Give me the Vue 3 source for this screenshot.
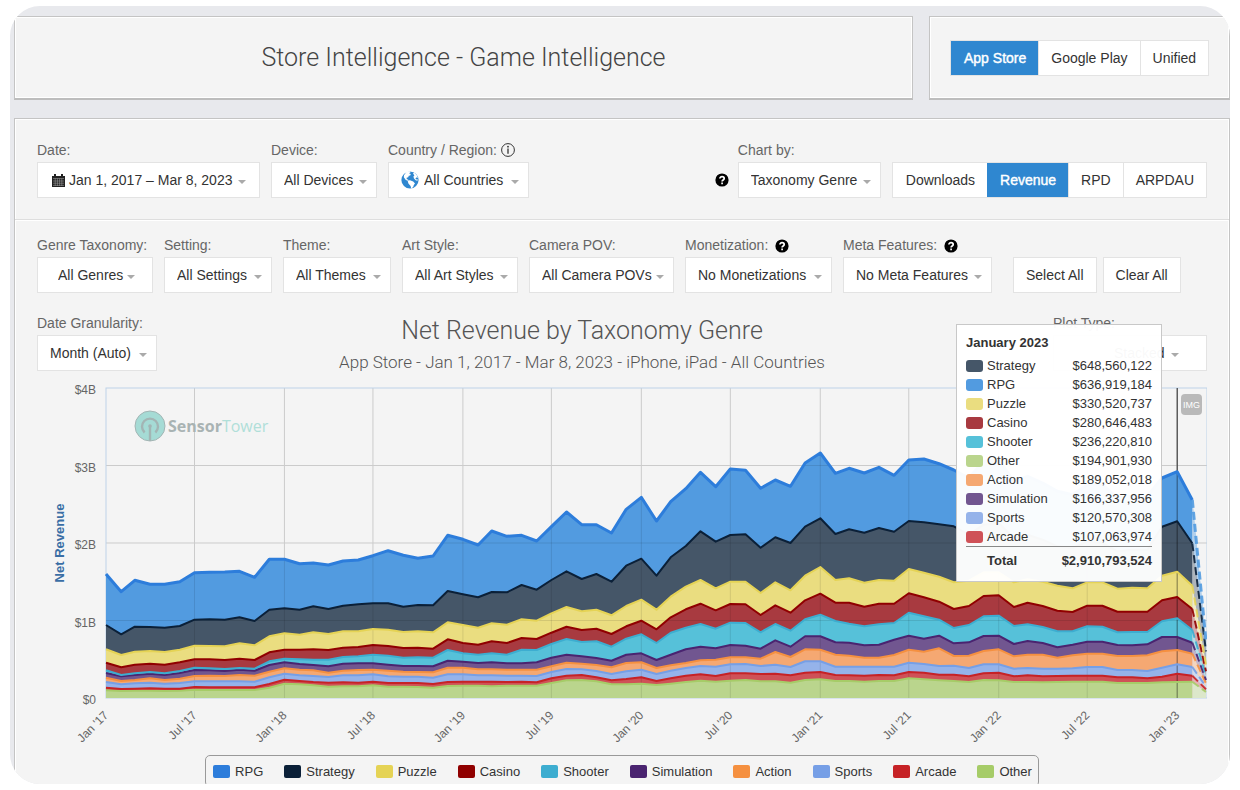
<script setup>
const stores = ['App Store', 'Google Play', 'Unified']
const metrics = ['Downloads', 'Revenue', 'RPD', 'ARPDAU']

const filters = [
  { id: 'genre', label: 'Genre Taxonomy:', value: 'All Genres', size: 'w116 roomy' },
  { id: 'setting', label: 'Setting:', value: 'All Settings', size: 'w108' },
  { id: 'theme', label: 'Theme:', value: 'All Themes', size: 'w108' },
  { id: 'art', label: 'Art Style:', value: 'All Art Styles', size: 'w116' },
  { id: 'camera', label: 'Camera POV:', value: 'All Camera POVs', size: 'w145' },
  { id: 'money', label: 'Monetization:', value: 'No Monetizations', size: 'w147', help: true },
  { id: 'meta', label: 'Meta Features:', value: 'No Meta Features', size: 'w149', help: true },
]

const tooltipRows = [
  ['Strategy', '$648,560,122', '#455668'],
  ['RPG', '$636,919,184', '#529be0'],
  ['Puzzle', '$330,520,737', '#eadd80'],
  ['Casino', '$280,646,483', '#a83a40'],
  ['Shooter', '$236,220,810', '#56c1d9'],
  ['Other', '$194,901,930', '#bad58d'],
  ['Action', '$189,052,018', '#f5a872'],
  ['Simulation', '$166,337,956', '#715690'],
  ['Sports', '$120,570,308', '#95b3ea'],
  ['Arcade', '$107,063,974', '#cf5157'],
]

// Stacked upper boundary of every genre per month, Jan 2017 to Mar 2023.
// 930 units equal $4B.
const series = [
  { name: 'RPG', line: '#2d7ddb', fill: '#529be0', width: 3, top: [372,319,353,341,341,349,376,377,378,380,362,416,416,403,405,399,411,414,427,442,428,419,426,488,476,459,501,485,488,471,514,558,520,520,495,566,602,531,589,628,677,634,687,683,629,654,635,705,735,674,689,675,692,668,714,717,703,684,660,710,715,650,665,645,620,610,640,640,600,605,605,660,679,594,170] },
  { name: 'Strategy', line: '#0b2038', fill: '#455668', width: 2, top: [219,191,214,213,211,216,235,236,235,242,231,265,269,265,275,267,277,281,284,284,274,279,278,321,311,302,318,317,339,325,354,380,357,372,349,397,418,367,422,456,500,469,489,491,451,482,465,514,539,492,506,496,510,499,531,527,521,515,490,520,525,480,490,475,455,450,470,465,440,445,445,514,530,464,140] },
  { name: 'Puzzle', line: '#e5d355', fill: '#eadd80', width: 2, top: [146,129,139,141,138,145,157,156,155,164,158,185,194,190,197,192,200,200,207,205,198,200,197,227,219,211,224,220,236,232,254,273,260,265,248,276,295,265,304,334,354,329,349,349,315,347,323,367,393,354,359,346,354,352,387,376,364,347,352,377,377,347,356,349,337,329,347,347,328,331,329,367,379,337,100] },
  { name: 'Casino', line: '#900000', fill: '#a83a40', width: 2, top: [106,92,100,103,100,107,116,116,114,118,114,137,145,145,146,144,151,153,159,156,150,151,148,176,165,160,170,165,180,177,196,214,204,208,192,215,232,206,242,266,283,263,282,281,249,278,256,293,313,286,286,274,283,283,314,302,289,267,276,306,308,273,286,276,262,258,277,277,259,259,259,293,303,267,80] },
  { name: 'Shooter', line: '#3dadd0', fill: '#56c1d9', width: 2, top: [83,69,74,78,74,81,91,89,87,90,88,110,118,116,115,115,123,125,130,127,121,122,121,144,134,130,134,130,145,144,162,177,168,170,154,178,191,165,196,211,222,208,226,225,197,222,202,236,250,231,223,215,221,225,256,245,235,210,219,245,247,216,221,213,200,200,215,214,197,198,198,230,239,204,66] },
  { name: 'Simulation', line: '#4a2470', fill: '#715690', width: 2, top: [75,65,69,73,69,75,84,83,81,85,82,99,107,102,99,95,103,104,104,100,96,96,95,112,109,105,107,104,104,107,121,130,125,120,112,130,134,114,130,146,154,149,159,157,148,173,154,185,185,167,166,158,160,175,187,178,187,164,167,186,187,162,171,165,152,160,169,169,159,158,161,183,183,166,54] },
  { name: 'Action', line: '#f59040', fill: '#f5a872', width: 2, top: [61,51,54,59,54,58,66,67,66,69,67,79,89,85,83,76,82,84,85,82,79,78,77,91,91,86,86,85,85,85,95,106,103,99,92,105,107,90,98,105,113,115,122,122,118,138,123,146,145,130,127,121,121,129,145,139,149,126,127,141,146,125,130,130,121,128,133,133,126,126,128,140,144,133,44] },
  { name: 'Sports', line: '#769fe6', fill: '#95b3ea', width: 2, top: [48,41,44,46,43,45,50,50,50,50,49,62,73,68,66,63,68,68,71,65,64,64,61,71,71,68,68,67,67,66,78,87,86,81,72,80,85,72,82,90,96,94,101,102,96,100,93,110,110,94,94,94,94,94,106,102,96,97,90,101,101,88,90,88,88,89,93,93,84,84,81,91,101,93,34] },
  { name: 'Arcade', line: '#c62226', fill: '#cf5157', width: 2, top: [31,27,28,29,28,28,33,32,32,32,32,42,55,51,48,46,47,46,49,45,45,45,42,48,49,49,49,48,49,47,59,67,69,62,53,57,62,51,59,67,71,66,74,74,72,73,68,76,78,69,68,67,69,68,78,76,70,70,65,74,76,65,68,65,66,67,67,67,62,62,59,64,73,67,26] },
  { name: 'Other', line: '#a6cc68', fill: '#bad58d', width: 2, top: [23,21,22,22,21,22,25,24,24,24,24,31,43,41,38,34,35,35,38,34,34,33,31,36,37,37,35,37,37,37,45,53,54,50,41,41,43,39,43,48,52,49,52,54,50,50,46,54,56,51,51,49,51,51,59,56,53,51,48,54,53,48,48,47,48,49,49,49,45,45,45,47,48,49,18] },
]

const plot = { left: 69, top: 14, right: 1170, bottom: 324 }
const DAY = 86400000
const start = Date.UTC(2017, 0, 1)
const end = Date.UTC(2023, 2, 3)
const xs = Array.from({ length: 75 }, (_, i) => {
  const days = (Date.UTC(2017, i, 1) - start) / DAY
  return plot.left + (days * (plot.right - plot.left)) / ((end - start) / DAY)
})
const yOf = (v) => plot.bottom - (v * (plot.bottom - plot.top)) / 930
const points = (s, from, to) =>
  s.top.slice(from, to).map((v, i) => `${xs[i + from].toFixed(1)},${yOf(v).toFixed(1)}`).join(' ')
const area = (s, from, to) =>
  `${xs[from].toFixed(1)},${plot.bottom} ${points(s, from, to)} ${xs[to - 1].toFixed(1)},${plot.bottom}`

const ticks = xs
  .map((x, i) => ({ x, i, label: `${i % 12 ? 'Jul' : 'Jan'} '${17 + Math.floor(i / 12)}` }))
  .filter((t) => t.i % 6 === 0)
const levels = [4, 3, 2, 1, 0].map((n) => ({
  y: yOf(n * 232.5),
  label: n ? `$${n}B` : '$0',
}))
const crossX = xs[72]
</script>

<template>
  <div class="frame">
    <header class="top">
      <div class="card heading"><h1>Store Intelligence - Game Intelligence</h1></div>
      <div class="card store">
        <div class="segmented">
          <button v-for="(s, i) in stores" :key="s" type="button" :class="{ active: i === 0 }">{{ s }}</button>
        </div>
      </div>
    </header>

    <main class="card panel">
      <section class="row first">
        <div class="field">
          <label for="date">Date:</label>
          <button id="date" type="button" class="control date">
            <svg class="calendar" viewBox="0 0 13 13" width="13" height="13" aria-hidden="true">
              <path d="M0 2h13v11H0z" fill="#222" />
              <path d="M2 0h2v3H2zM9 0h2v3H9z" fill="#222" />
              <path d="M1 4.500h11M1 7h11M1 9.200h11M1 11.400h11M3.200 4.500v7.500M5.400 4.500v7.500M7.600 4.500v7.500M9.800 4.500v7.500" stroke="#aaa" stroke-width=".5" fill="none" />
            </svg>
            <span>Jan 1, 2017 – Mar 8, 2023</span>
            <i class="caret"></i>
          </button>
        </div>
        <div class="field">
          <label for="device">Device:</label>
          <div class="select w106"><select id="device"><option>All Devices</option></select><i class="caret"></i></div>
        </div>
        <div class="field">
          <label for="country">Country / Region:
            <svg class="info" viewBox="0 0 14 14" width="14" height="14" aria-hidden="true">
              <circle cx="7" cy="7" r="6.400" fill="none" stroke="#333" stroke-width="1" />
              <path d="M7 5.600v5.200" fill="none" stroke="#333" stroke-width="1.300" />
              <circle cx="7" cy="3.700" r=".9" fill="#333" />
            </svg>
          </label>
          <div class="select w141 flagged">
            <svg class="globe" viewBox="0 0 18 18" width="18" height="18" aria-hidden="true">
              <circle cx="9" cy="9" r="8.600" fill="#2f87d0" />
              <path d="M5.500 .8 9 .3l.6 1-1.600 1 1.800.6-.6 1.600-1.400.2-.6 1.500-1.600.6.2 1.400 1.400.2-.2 1.300-2.200-.8-2-2.600.2-2z" fill="#fff" />
              <path d="M6.600 9.600l2.400-.4 3.200 1.400 1.800 1.800-1.200 1.600-.6 2-2 1.600-.6-2.600-2.200-2.400z" fill="#fff" />
              <path d="M11.800 2.200l2-.2 2 2.200 1.200 2.600-1.800-.4-.8 1 1.200 1 1.400.2-.2 1-1.800-.2-2-1.800-.6-2 1-1.200z" fill="#fff" />
            </svg>
            <select id="country"><option>All Countries</option></select><i class="caret"></i>
          </div>
        </div>
        <div class="field chartby">
          <label for="chartby">Chart by:</label>
          <div class="with-help">
            <svg class="help" viewBox="0 0 14 14" width="14" height="14" aria-hidden="true">
              <circle cx="7" cy="7" r="6.600" fill="#000" />
              <path d="M4.900 5.500c0-2.500 4.300-2.400 4.300 0C9.200 7 7.100 6.900 7.100 8.500M7.100 9.600v1.700" fill="none" stroke="#fff" stroke-width="1.700" />
            </svg>
            <div class="select w143"><select id="chartby"><option>Taxonomy Genre</option></select><i class="caret"></i></div>
          </div>
        </div>
        <div class="segmented">
          <button v-for="m in metrics" :key="m" type="button" :class="{ active: m === 'Revenue' }">{{ m }}</button>
        </div>
      </section>

      <section class="row second">
        <div v-for="f in filters" :key="f.id" class="field">
          <label :for="f.id">{{ f.label }}
            <svg v-if="f.help" class="help inline" viewBox="0 0 14 14" width="14" height="14" aria-hidden="true">
              <circle cx="7" cy="7" r="6.600" fill="#000" />
              <path d="M4.900 5.500c0-2.500 4.300-2.400 4.300 0C9.200 7 7.100 6.900 7.100 8.500M7.100 9.600v1.700" fill="none" stroke="#fff" stroke-width="1.700" />
            </svg>
          </label>
          <div class="select" :class="f.size"><select :id="f.id"><option>{{ f.value }}</option></select><i class="caret"></i></div>
        </div>
        <div class="actions">
          <button type="button" class="control">Select All</button>
          <button type="button" class="control">Clear All</button>
        </div>
      </section>

      <section class="chart">
        <div class="chart-head">
          <div class="field">
            <label for="granularity">Date Granularity:</label>
            <div class="select w120"><select id="granularity"><option>Month (Auto)</option></select><i class="caret"></i></div>
          </div>
          <div class="titles">
            <h2>Net Revenue by Taxonomy Genre</h2>
            <p>App Store - Jan 1, 2017 - Mar 8, 2023 - iPhone, iPad - All Countries</p>
          </div>
          <div class="field">
            <label for="plot">Plot Type:</label>
            <div class="select plot-type"><select id="plot"><option>Stacked</option></select><i class="caret"></i></div>
          </div>
        </div>

        <div class="canvas">
          <svg class="graph" viewBox="0 0 1170 373" role="img" aria-label="Net revenue by taxonomy genre">
            <defs>
              <clipPath id="filled"><polygon :points="area(series[0], 0, 74)" /></clipPath>
            </defs>
            <g stroke="#cbcbcb">
              <line v-for="t in ticks.slice(1)" :key="t.i" :x1="t.x" :x2="t.x" :y1="plot.top" :y2="plot.bottom" />
              <line v-for="l in levels.slice(1, 4)" :key="l.label" :x1="plot.left" :x2="plot.right" :y1="l.y" :y2="l.y" />
            </g>
            <rect :x="plot.left" :y="plot.top" :width="plot.right - plot.left" :height="plot.bottom - plot.top" fill="none" stroke="#bdd2e8" />
            <line :x1="crossX" :x2="crossX" :y1="plot.top" :y2="plot.bottom" stroke="#222" />

            <g class="brand">
              <circle cx="113" cy="52" r="15" fill="#a5dbd5" stroke="#a3b5b4" />
              <path d="M107.600 58.500a8 8 0 1 1 10.800 0" fill="none" stroke="#a3b5b4" stroke-width="2.400" />
              <path d="M113 52v15" stroke="#a3b5b4" stroke-width="2.400" />
              <circle cx="113" cy="52" r="1.800" fill="#a3b5b4" />
              <text x="131" y="58" class="brand-text"><tspan class="brand-bold">Sensor</tspan><tspan class="brand-light">Tower</tspan></text>
            </g>

            <g v-for="s in series" :key="s.name">
              <polygon :points="area(s, 0, 74)" :fill="s.fill" />
              <polygon :points="area(s, 73, 75)" :fill="s.fill" />
              <polygon :points="area(s, 73, 75)" fill="#f4f4f4" fill-opacity=".6" />
            </g>
            <g clip-path="url(#filled)" stroke="#000">
              <line v-for="t in ticks.slice(1)" :key="t.i" :x1="t.x" :x2="t.x" :y1="plot.top" :y2="plot.bottom" stroke-opacity=".1" />
              <line v-for="l in levels.slice(1, 4)" :key="l.label" :x1="plot.left" :x2="plot.right" :y1="l.y" :y2="l.y" stroke-opacity=".1" />
              <line :x1="crossX" :x2="crossX" :y1="plot.top" :y2="plot.bottom" stroke-opacity=".4" />
            </g>
            <g v-for="s in [...series].reverse()" :key="s.name" fill="none" :stroke="s.line" stroke-linejoin="round">
              <polyline :points="points(s, 0, 74)" :stroke-width="s.width" />
              <polyline :points="points(s, 73, 75)" :stroke="s.name === 'RPG' ? '#529be0' : s.line" :stroke-width="s.width" stroke-dasharray="8 4" stroke-opacity=".9" />
            </g>

            <text v-for="l in levels" :key="l.label" x="59" :y="l.y + 6" text-anchor="end" class="axis">{{ l.label }}</text>
            <text v-for="t in ticks" :key="t.i" :transform="`translate(${t.x + 3} ${plot.bottom + 18}) rotate(-45)`" text-anchor="end" class="axis">{{ t.label }}</text>
            <text transform="translate(27 169) rotate(-90)" text-anchor="middle" class="axis-title">Net Revenue</text>
          </svg>
          <button type="button" class="export">IMG</button>
        </div>

        <ul class="legend">
          <li v-for="s in series" :key="s.name">
            <svg class="swatch" width="17" height="13" aria-hidden="true"><rect width="17" height="13" rx="2" :fill="s.line" /></svg>{{ s.name }}
          </li>
        </ul>

        <div class="tooltip">
          <strong>January 2023</strong>
          <table>
            <tbody>
              <tr v-for="r in tooltipRows" :key="r[0]">
                <td class="key"><svg width="17" height="12" aria-hidden="true"><rect width="17" height="12" rx="3" :fill="r[2]" /></svg></td>
                <td>{{ r[0] }}</td>
                <td class="num">{{ r[1] }}</td>
              </tr>
            </tbody>
            <tfoot>
              <tr><td></td><th>Total</th><th class="num">$2,910,793,524</th></tr>
            </tfoot>
          </table>
        </div>
      </section>
    </main>
  </div>
</template>

<style>
body {
  background: #fff;
}
</style>

<style scoped>
.frame {
  box-sizing: border-box;
  height: calc(100vh - 12px);
  margin: 6px 10px;
  padding: 10px 0 0 4px;
  overflow: hidden;
  border-radius: 30px;
  background: #e8e9ed;
  color: #333;
  font-family: "Liberation Sans", Arial, sans-serif;
  font-size: 14px;
}
.frame * {
  box-sizing: border-box;
}
button,
select {
  font: inherit;
  color: inherit;
}
h1,
h2,
p {
  margin: 0;
}
.card {
  background: #f4f4f4;
  border: 1px solid #c4c4c4;
  box-shadow: inset 0 0 0 1px #fff;
}
.top {
  display: flex;
  gap: 16px;
  height: 84px;
}
.top .card {
  display: flex;
  align-items: center;
  border-bottom: 2px solid #bdbdbd;
}
.heading {
  flex: 1;
  justify-content: center;
}
.heading h1 {
  font-family: Roboto, "Liberation Sans", sans-serif;
  font-size: 25px;
  font-weight: 300;
  color: #444;
}
.store {
  width: 301px;
  padding-left: 20px;
}
.segmented {
  display: flex;
  height: 36px;
  border: 1px solid #e3e3e3;
  background: #fff;
}
.segmented button {
  padding: 0 12px;
  border: 0;
  border-left: 1px solid #e3e3e3;
  background: #fff;
}
.segmented button:first-child {
  border-left-color: transparent;
}
.segmented .active {
  background: #2f87d0;
  color: #fff;
  border-color: #2f87d0;
  -webkit-text-stroke: 0.4px #fff;
}
.panel {
  margin-top: 18px;
  min-height: 100%;
}
.row {
  display: flex;
  align-items: flex-end;
  gap: 11px;
  padding: 0 22px;
}
.first {
  padding-top: 23px;
  padding-bottom: 21px;
  border-bottom: 1px solid #dedede;
  box-shadow: 0 1px 0 #fff;
}
.second {
  padding-top: 17px;
}
.field {
  display: flex;
  flex-direction: column;
  gap: 4px;
}
.field label {
  display: flex;
  align-items: center;
  gap: 4px;
  height: 16px;
  line-height: 16px;
  color: #666;
  white-space: nowrap;
}
.field label .inline {
  margin-left: 3px;
  margin-top: 2px;
}
.control {
  height: 36px;
  padding: 0 12px;
  border: 1px solid #e3e3e3;
  background: #fff;
  white-space: nowrap;
}
.date {
  display: flex;
  align-items: center;
  gap: 4px;
  width: 223px;
  padding: 0 13px 0 14px;
}
.date .caret {
  margin-left: auto;
  margin-top: 3px;
}
.caret {
  width: 0;
  height: 0;
  border: 4px solid transparent;
  border-top-color: #aaa;
  border-bottom-width: 0;
}
.select {
  position: relative;
  height: 36px;
}
.select select {
  width: 100%;
  height: 36px;
  padding: 0 0 1px 12px;
  border: 1px solid #e3e3e3;
  border-radius: 0;
  background: #fff;
  appearance: none;
}
.select .caret {
  position: absolute;
  right: 10px;
  top: 18px;
  pointer-events: none;
}
.roomy select {
  padding-left: 20px;
}
.roomy .caret {
  right: 18px;
}
.flagged select {
  padding-left: 35px;
}
.globe {
  position: absolute;
  left: 13px;
  top: 9px;
}
.w106 { width: 106px; }
.w108 { width: 108px; }
.w116 { width: 116px; }
.w120 { width: 120px; }
.w141 { width: 141px; }
.w143 { width: 143px; }
.w145 { width: 145px; }
.w147 { width: 147px; }
.w149 { width: 149px; }
.chartby {
  margin-left: auto;
}
.chartby label {
  padding-left: 23px;
}
.with-help {
  display: flex;
  align-items: center;
  gap: 9px;
}
.with-help .help {
  width: 14px;
}
.actions {
  display: flex;
  gap: 6px;
  margin-left: 10px;
}
.chart {
  position: relative;
  padding: 22px 22px 0;
}
.chart-head {
  display: grid;
  grid-template-columns: 120px 1fr 154px;
}
.titles {
  padding-right: 46px;
  text-align: center;
  font-family: Roboto, "Liberation Sans", sans-serif;
  font-weight: 300;
  color: #555;
}
.titles h2 {
  font-size: 25px;
  font-weight: 300;
  line-height: 32px;
}
.titles p {
  padding-top: 3px;
  font-size: 17px;
  line-height: 24px;
}
.plot-type select {
  padding-left: 60px;
}
.plot-type .caret {
  right: 28px;
}
.canvas {
  position: relative;
}
.graph {
  display: block;
  width: 100%;
  height: auto;
}
.axis {
  font-size: 12px;
  fill: #666;
}
.axis-title {
  font-size: 13px;
  font-weight: bold;
  fill: #3a6ea5;
}
.brand-text {
  font-family: "Open Sans", "Noto Sans", sans-serif;
  font-size: 16px;
}
.brand-bold {
  font-weight: 700;
  fill: #a9b3b3;
}
.brand-light {
  fill: #b0dfd9;
}
.export {
  position: absolute;
  top: 20px;
  right: 5px;
  width: 21px;
  height: 21px;
  padding: 0;
  border: 0;
  border-radius: 4px;
  background: #b9b9b9;
  color: #fff;
  font-size: 9px;
}
.legend {
  display: flex;
  justify-content: space-between;
  gap: 21px;
  width: fit-content;
  height: 32px;
  margin: 8px auto 0;
  padding: 0 6px 0 7px;
  align-items: center;
  list-style: none;
  border: 1px solid #999;
  border-radius: 5px;
  font-size: 13px;
  white-space: nowrap;
}
.legend li {
  display: flex;
  align-items: center;
  gap: 5px;
}
.tooltip {
  position: absolute;
  top: 31px;
  right: 67px;
  width: 206px;
  height: 258px;
  padding: 8px 9px 0;
  border: 1px solid #c8c8c8;
  background: rgba(255, 255, 255, 0.97);
  font-size: 13px;
}
.tooltip strong {
  display: block;
  height: 23px;
  line-height: 19px;
}
.tooltip table {
  width: 100%;
  border-collapse: collapse;
}
.tooltip td,
.tooltip th {
  height: 19px;
  padding: 0;
  text-align: left;
  line-height: 19px;
}
.tooltip .key {
  width: 21px;
}
.tooltip .key svg {
  display: block;
}
.tooltip .num {
  text-align: right;
}
.tooltip tfoot td,
.tooltip tfoot th {
  height: 28px;
  border-top: 1px solid #888;
}
</style>
